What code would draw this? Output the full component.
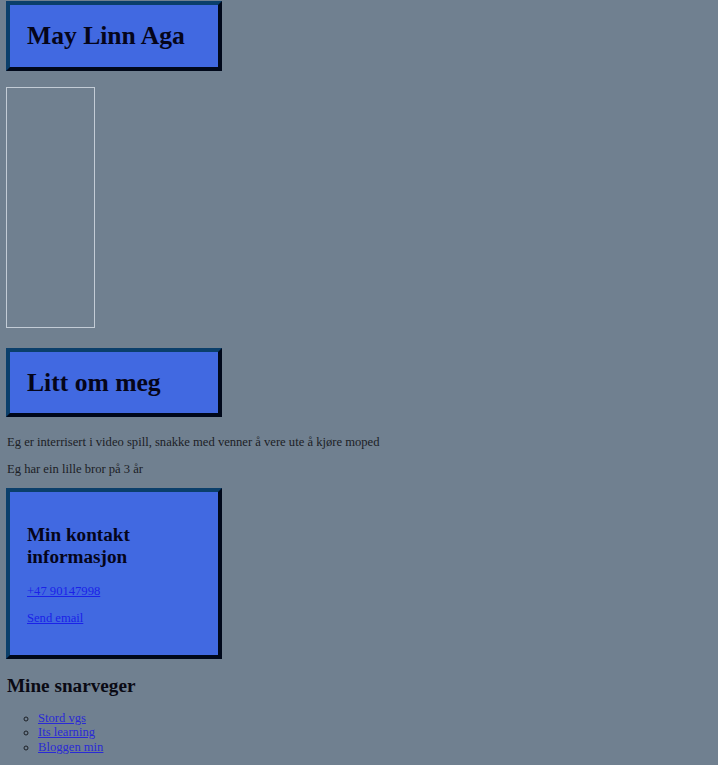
import React from "react";

const boxCls =
  "w-[216px] border-4 border-t-[#0b3f6b] border-l-[#0b3f6b] border-b-[#00081a] border-r-[#00081a] bg-[#4169e1] px-[16px] py-[16px]";

export default function App() {
  return (
    <div className="min-h-[765px] w-full bg-[#708090] pl-[6px] pt-[1px] pb-[8px] font-['Liberation_Serif',serif] text-[12.6px] leading-[14.7px] text-black">
      <div className={boxCls}>
        <h1 className="pl-[1px] text-[25.6px] leading-[29.5px] font-bold text-[#05051a]">May Linn Aga</h1>
      </div>

      <div className="mt-[16px] h-[241px] w-[89px] border border-[#c3ccd6]" />

      <div className={boxCls + " mt-[20px]"}>
        <h1 className="pl-[1px] text-[25.6px] leading-[29.5px] font-bold text-[#05051a]">Litt om meg</h1>
      </div>

      <p className="mt-[17.5px] pl-[1px] text-[#1c2026]">
        Eg er interrisert i video spill, snakke med venner å vere ute å kjøre moped
      </p>
      <p className="mt-[12.3px] pl-[1px] text-[#1c2026]">Eg har ein lille bror på 3 år</p>

      <div className={boxCls + " mt-[11.5px]"}>
        <h2 className="mt-[16px] pl-[1px] text-[19.2px] leading-[22px] font-bold text-[#05051a]">
          Min kontakt informasjon
        </h2>
        <p className="mt-[16px] pl-[1px]">
          <a href="#" className="text-[#1a22e8] underline">+47 90147998</a>
        </p>
        <p className="mt-[12.8px] mb-[12.8px] pl-[1px]">
          <a href="#" className="text-[#1a22e8] underline">Send email</a>
        </p>
      </div>

      <h2 className="mt-[16px] pl-[1px] text-[19.2px] leading-[22px] font-bold text-[#0a0a14]">Mine snarveger</h2>
      <ul className="mt-[14px] list-[circle] pl-[32px] text-[#1c2026]">
        <li>
          <a href="#" className="text-[#2a2ad6] underline">Stord vgs</a>
        </li>
        <li>
          <a href="#" className="text-[#2a2ad6] underline">Its learning</a>
        </li>
        <li>
          <a href="#" className="text-[#2a2ad6] underline">Bloggen min</a>
        </li>
      </ul>
    </div>
  );
}
